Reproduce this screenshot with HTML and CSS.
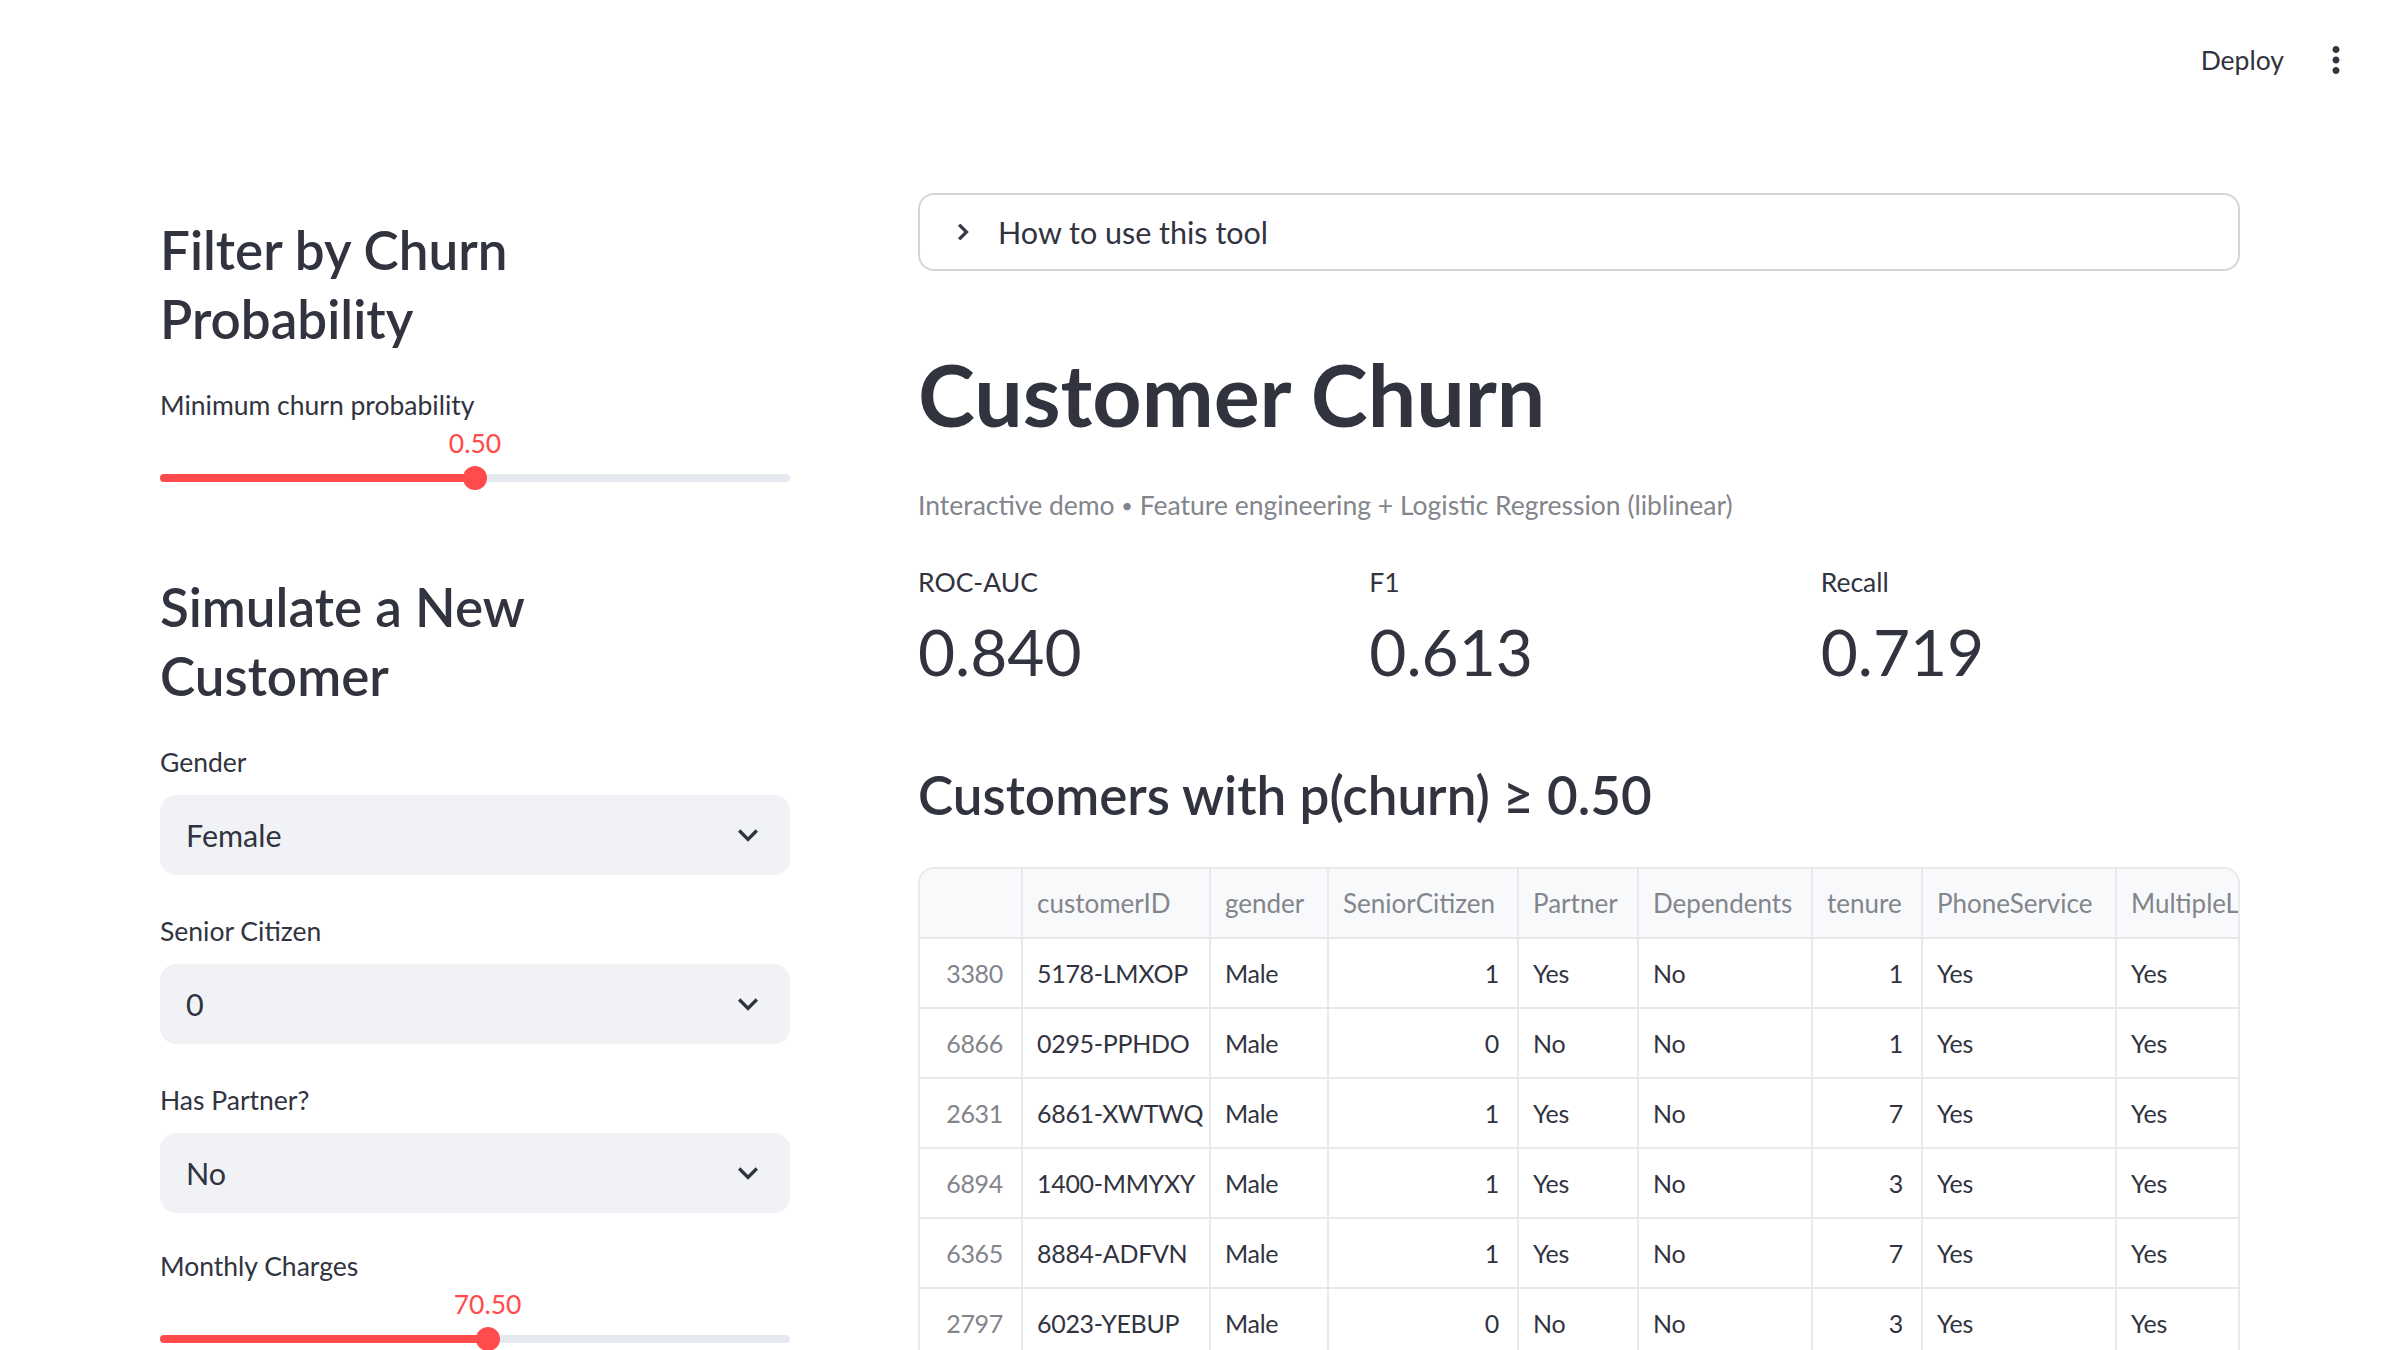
FILE: index.html
```html
<!DOCTYPE html>
<html lang="en">
<head>
<meta charset="utf-8">
<title>Customer Churn</title>
<link rel="stylesheet" href="styles.css">
</head>
<body>
<header class="topbar">
  <span class="deploy">Deploy</span>
  <svg class="kebab" viewBox="0 0 24 24" aria-hidden="true"><path d="M12 8c1.1 0 2-.9 2-2s-.9-2-2-2-2 .9-2 2 .9 2 2 2zm0 2c-1.1 0-2 .9-2 2s.9 2 2 2 2-.9 2-2-.9-2-2-2zm0 6c-1.1 0-2 .9-2 2s.9 2 2 2 2-.9 2-2-.9-2-2-2z"/></svg>
</header>
<main class="main">
  <section class="col col-left">
    <h3 class="subheader side first">Filter by Churn Probability</h3>
    <div class="slider slider-first">
      <div class="widget-label">Minimum churn probability</div>
      <div class="slider-body">
        <div class="track">
          <div class="fill" style="width:50%"></div>
          <div class="thumb" style="left:50%"><span class="thumb-value">0.50</span></div>
        </div>
      </div>
    </div>
    <h3 class="subheader side second">Simulate a New Customer</h3>
    <div class="field field-first">
      <div class="widget-label">Gender</div>
      <div class="select"><span>Female</span><svg class="chev-down" viewBox="0 0 24 24"><path d="M16.59 8.59L12 13.17 7.41 8.59 6 10l6 6 6-6z"/></svg></div>
    </div>
    <div class="field">
      <div class="widget-label">Senior Citizen</div>
      <div class="select"><span>0</span><svg class="chev-down" viewBox="0 0 24 24"><path d="M16.59 8.59L12 13.17 7.41 8.59 6 10l6 6 6-6z"/></svg></div>
    </div>
    <div class="field">
      <div class="widget-label">Has Partner?</div>
      <div class="select"><span>No</span><svg class="chev-down" viewBox="0 0 24 24"><path d="M16.59 8.59L12 13.17 7.41 8.59 6 10l6 6 6-6z"/></svg></div>
    </div>
    <div class="slider slider-field">
      <div class="widget-label">Monthly Charges</div>
      <div class="slider-body">
        <div class="track">
          <div class="fill" style="width:52%"></div>
          <div class="thumb" style="left:52%"><span class="thumb-value">70.50</span></div>
        </div>
      </div>
    </div>
  </section>

  <section class="col col-right">
    <div class="expander">
      <svg class="chev-right" viewBox="0 0 24 24"><path d="M10 6L8.59 7.41 13.17 12l-4.58 4.59L10 18l6-6z"/></svg>
      <span>How to use this tool</span>
    </div>
    <h1 class="title">Customer Churn</h1>
    <p class="caption">Interactive demo <span class="dot">•</span> Feature engineering + Logistic Regression (liblinear)</p>
    <div class="metrics">
      <div class="metric"><div class="metric-label">ROC-AUC</div><div class="metric-value">0.840</div></div>
      <div class="metric"><div class="metric-label">F1</div><div class="metric-value">0.613</div></div>
      <div class="metric"><div class="metric-label">Recall</div><div class="metric-value">0.719</div></div>
    </div>
    <h3 class="subheader table-title">Customers with p(churn) ≥ 0.50</h3>
    <div class="grid-wrap">
      <div class="grid">
        <div class="row head">
          <div class="cell"></div><div class="cell">customerID</div><div class="cell">gender</div><div class="cell">SeniorCitizen</div><div class="cell">Partner</div><div class="cell">Dependents</div><div class="cell">tenure</div><div class="cell">PhoneService</div><div class="cell">MultipleLines</div><div class="cell">InternetService</div>
        </div>
        <div class="row">
          <div class="cell idx">3380</div><div class="cell">5178-LMXOP</div><div class="cell">Male</div><div class="cell num">1</div><div class="cell">Yes</div><div class="cell">No</div><div class="cell num">1</div><div class="cell">Yes</div><div class="cell">Yes</div><div class="cell">Fiber optic</div>
        </div>
        <div class="row">
          <div class="cell idx">6866</div><div class="cell">0295-PPHDO</div><div class="cell">Male</div><div class="cell num">0</div><div class="cell">No</div><div class="cell">No</div><div class="cell num">1</div><div class="cell">Yes</div><div class="cell">Yes</div><div class="cell">Fiber optic</div>
        </div>
        <div class="row">
          <div class="cell idx">2631</div><div class="cell">6861-XWTWQ</div><div class="cell">Male</div><div class="cell num">1</div><div class="cell">Yes</div><div class="cell">No</div><div class="cell num">7</div><div class="cell">Yes</div><div class="cell">Yes</div><div class="cell">Fiber optic</div>
        </div>
        <div class="row">
          <div class="cell idx">6894</div><div class="cell">1400-MMYXY</div><div class="cell">Male</div><div class="cell num">1</div><div class="cell">Yes</div><div class="cell">No</div><div class="cell num">3</div><div class="cell">Yes</div><div class="cell">Yes</div><div class="cell">Fiber optic</div>
        </div>
        <div class="row">
          <div class="cell idx">6365</div><div class="cell">8884-ADFVN</div><div class="cell">Male</div><div class="cell num">1</div><div class="cell">Yes</div><div class="cell">No</div><div class="cell num">7</div><div class="cell">Yes</div><div class="cell">Yes</div><div class="cell">Fiber optic</div>
        </div>
        <div class="row">
          <div class="cell idx">2797</div><div class="cell">6023-YEBUP</div><div class="cell">Male</div><div class="cell num">0</div><div class="cell">No</div><div class="cell">No</div><div class="cell num">3</div><div class="cell">Yes</div><div class="cell">Yes</div><div class="cell">Fiber optic</div>
        </div>
      </div>
    </div>
  </section>
</main>
</body>
</html>
```

FILE: styles.css
```css
* { box-sizing: border-box; }

html, body {
  margin: 0;
  padding: 0;
  height: 1350px;
  overflow: hidden;
  background: #ffffff;
}

body {
  font-family: Lato, "Noto Sans", "Liberation Sans", sans-serif;
  color: #31333f;
}

/* ---------- top bar ---------- */
.topbar {
  height: 120px;
  display: flex;
  justify-content: flex-end;
  align-items: center;
  gap: 31px;
  padding-right: 43px;
}

.deploy {
  font-size: 26.5px;
  line-height: 40px;
  color: #31333f;
}

.kebab {
  width: 42px;
  height: 42px;
  fill: #31333f;
  display: block;
}

/* ---------- main layout ---------- */
.main {
  display: grid;
  grid-template-columns: 630px 1fr;
  column-gap: 128px;
  padding: 72px 160px 0;
}

.col {
  display: flex;
  flex-direction: column;
  min-width: 0;
}

.subheader {
  margin: 0;
  font-size: 53px;
  line-height: 69px;
  font-weight: 600;
  color: #31333f;
}

.subheader.side { max-width: 570px; }
.subheader.first { margin-top: 23px; }
.subheader.second { margin-top: 76px; }

/* ---------- widgets ---------- */
.widget-label {
  height: 48px;
  display: flex;
  align-items: center;
  font-size: 26.5px;
  color: #31333f;
}

.slider-first { margin-top: 28px; }
.slider-field { margin-top: 29px; }

.field { margin-top: 32px; }
.field-first { margin-top: 28px; }

.field .widget-label { margin-bottom: 9px; }

.slider-body {
  position: relative;
  height: 67px;
}

.track {
  position: absolute;
  left: 0;
  right: 0;
  top: 45px;
  height: 8px;
  border-radius: 4px;
  background: #e5e9f0;
}

.fill {
  position: absolute;
  left: 0;
  top: 0;
  bottom: 0;
  border-radius: 4px;
  background: #ff4b4b;
}

.thumb {
  position: absolute;
  top: 50%;
  width: 24px;
  height: 24px;
  margin: -12px 0 0 -12px;
  border-radius: 50%;
  background: #ff4b4b;
}

.thumb-value {
  position: absolute;
  left: 50%;
  bottom: calc(100% + 7px);
  transform: translateX(-50%);
  font-size: 26.5px;
  line-height: 32px;
  color: #ff4b4b;
  white-space: nowrap;
}

.select {
  height: 80px;
  border-radius: 16px;
  background: #f0f2f6;
  display: flex;
  align-items: center;
  justify-content: space-between;
  padding: 0 22px 0 26px;
  font-size: 30.5px;
  color: #31333f;
}

.chev-down {
  width: 40px;
  height: 40px;
  fill: #31333f;
  display: block;
}

/* ---------- right column ---------- */
.expander {
  margin-top: 1px;
  height: 78px;
  border: 2px solid #d6d6d9;
  border-radius: 16px;
  display: flex;
  align-items: center;
  gap: 19px;
  padding-left: 27px;
  font-size: 30.5px;
  color: #31333f;
}

.chev-right {
  width: 32px;
  height: 32px;
  fill: #31333f;
  stroke: #31333f;
  stroke-width: 0.6;
  display: block;
}

.title {
  margin: 73px 0 0;
  font-size: 86px;
  line-height: 100px;
  font-weight: 700;
  color: #31333f;
}

.caption {
  margin: 41px 0 0;
  font-size: 26.5px;
  line-height: 40px;
  color: #83858c;
}

.caption .dot {
  font-size: 20px;
  vertical-align: 2px;
}

.metrics {
  margin-top: 37px;
  display: grid;
  grid-template-columns: repeat(3, 1fr);
  column-gap: 32px;
}

.metric-label {
  font-size: 26.5px;
  line-height: 40px;
  color: #31333f;
}

.metric-value {
  margin-top: 10px;
  font-size: 64px;
  line-height: 80px;
  color: #31333f;
}

.subheader.table-title { margin-top: 68px; }

/* ---------- data grid ---------- */
.grid-wrap {
  margin-top: 38px;
  border: 2px solid #e8e9ec;
  border-bottom: 0;
  border-radius: 16px 16px 0 0;
  overflow: hidden;
}

.row {
  display: grid;
  grid-template-columns: 103px 188px 118px 190px 120px 174px 110px 194px 240px 240px;
  height: 70px;
}

.cell {
  border-right: 2px solid #e8e9ec;
  border-bottom: 2px solid #e8e9ec;
  padding: 0 14px;
  display: flex;
  align-items: center;
  font-size: 25px;
  letter-spacing: -0.3px;
  color: #31333f;
  white-space: nowrap;
  overflow: hidden;
}

.row.head .cell {
  background: #f8f9fb;
  color: #83858c;
  font-size: 26px;
  letter-spacing: 0;
}

.cell.idx {
  justify-content: flex-end;
  color: #83858c;
  padding-right: 18px;
}

.cell.num {
  justify-content: flex-end;
  padding-right: 18px;
}
```
